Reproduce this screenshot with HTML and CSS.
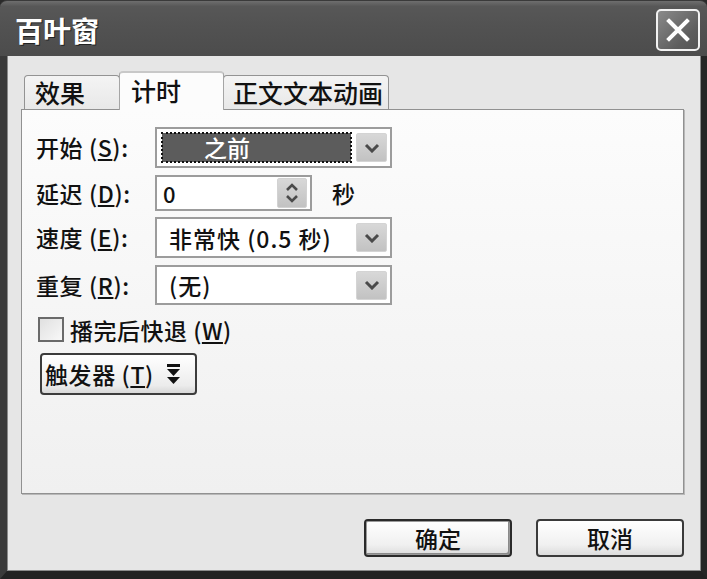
FILE: index.html
```html
<!DOCTYPE html>
<html lang="zh-CN">
<head>
<meta charset="utf-8">
<title>百叶窗</title>
<link rel="stylesheet" href="styles.css">
</head>
<body>
<div class="window">
  <div class="titlebar">
    <span class="title">百叶窗</span>
    <span class="close">
      <svg width="24" height="24" viewBox="0 0 24 24"><path d="M3 3 L21 21 M21 3 L3 21" stroke="#fff" stroke-width="4" stroke-linecap="square"/></svg>
    </span>
  </div>
  <div class="frame">
    <div class="tabs">
      <div class="tab tab-a">效果</div>
      <div class="tab tab-b active">计时</div>
      <div class="tab tab-c">正文文本动画</div>
    </div>
    <div class="panel">
      <div class="row row-tall">
        <span class="lbl">开始 (<u>S</u>):</span>
        <div class="combo">
          <span class="sel">之前</span>
          <span class="dd"><svg width="16" height="10" viewBox="0 0 16 10"><path d="M2 2 L8 8 L14 2" fill="none" stroke="#4a4a4a" stroke-width="3"/></svg></span>
        </div>
      </div>
      <div class="row row-spin">
        <span class="lbl">延迟 (<u>D</u>):</span>
        <div class="spin">
          <span class="val">0</span>
          <span class="spbtn">
            <svg width="16" height="26" viewBox="0 0 16 26"><path d="M3 10 L8 5 L13 10" fill="none" stroke="#4a4a4a" stroke-width="2.6"/><path d="M3 16 L8 21 L13 16" fill="none" stroke="#4a4a4a" stroke-width="2.6"/></svg>
          </span>
        </div>
        <span class="unit">秒</span>
      </div>
      <div class="row row-tall">
        <span class="lbl">速度 (<u>E</u>):</span>
        <div class="combo">
          <span class="txt">非常快 (0.5 秒)</span>
          <span class="dd"><svg width="16" height="10" viewBox="0 0 16 10"><path d="M2 2 L8 8 L14 2" fill="none" stroke="#4a4a4a" stroke-width="3"/></svg></span>
        </div>
      </div>
      <div class="row row-40">
        <span class="lbl">重复 (<u>R</u>):</span>
        <div class="combo">
          <span class="txt">(无)</span>
          <span class="dd"><svg width="16" height="10" viewBox="0 0 16 10"><path d="M2 2 L8 8 L14 2" fill="none" stroke="#4a4a4a" stroke-width="3"/></svg></span>
        </div>
      </div>
      <div class="check-row">
        <span class="box"></span>
        <span class="check-lbl">播完后快退 (<u>W</u>)</span>
      </div>
      <div class="trigger">
        <span>触发器 (<u>T</u>)</span>
        <svg width="15" height="21" viewBox="0 0 15 21"><rect x="1" y="0" width="13" height="3" fill="#111"/><path d="M1 5 L14 5 L7.5 12 Z" fill="#111"/><path d="M1 13 L14 13 L7.5 20 Z" fill="#111"/></svg>
      </div>
    </div>
    <div class="buttons">
      <div class="btn default">确定</div>
      <div class="btn">取消</div>
    </div>
  </div>
</div>
</body>
</html>
```

FILE: styles.css
```css
* { box-sizing: border-box; }
html, body { margin: 0; padding: 0; background: #2a2a2a; }
body { width: 707px; height: 579px; overflow: hidden; font-family: "Noto Sans CJK SC", "Noto Sans", sans-serif; color: #111; font-weight: 500; }

.window {
  width: 707px;
  height: 579px;
  display: flex;
  flex-direction: column;
}

.titlebar {
  height: 56px;
  flex: none;
  display: flex;
  align-items: center;
  justify-content: space-between;
  padding: 0 7px 0 15px;
  border-radius: 7px 7px 0 0;
  background: linear-gradient(#6e6e6e 0, #575757 10%, #525252 45%, #4c4c4c 100%);
  border-top: 1px solid #3a3a3a;
}
.title {
  color: #fff;
  font-size: 28px;
  font-weight: bold;
  line-height: 1;
  margin-top: 2px;
  text-shadow: 1px 1px 0 #222;
}
.close {
  width: 44px;
  height: 42px;
  margin-top: 2px;
  border: 2px solid #f2f2f2;
  border-radius: 5px;
  background: linear-gradient(135deg, #8a8a8a, #5e5e5e 70%, #555);
  display: flex;
  align-items: center;
  justify-content: center;
}

.frame {
  flex: 1;
  display: flex;
  flex-direction: column;
  background: #e6e6e6;
  border-left: 7px solid #3a3a3a;
  border-right: 6px solid #262626;
  border-bottom: 8px solid #222;
  box-shadow: inset 1px 0 0 #8a8a8a, inset -1px 0 0 #8a8a8a, inset 0 -1px 0 #8a8a8a;
  padding: 15px 17px 14px 14px;
}

.tabs {
  height: 38px;
  display: flex;
  align-items: flex-end;
  padding-left: 3px;
  position: relative;
  z-index: 2;
}
.tab {
  height: 34px;
  font-size: 25px;
  line-height: 33px;
  padding-left: 10px;
  background: linear-gradient(#f4f4f4, #e8e8e8);
  border: 1px solid #939393;
  border-bottom: none;
  border-radius: 4px 4px 0 0;
  white-space: nowrap;
}
.tab-a { width: 96px; }
.tab-b { width: 105px; margin-left: -1px; padding-left: 11px; }
.tab-c { width: 166px; padding-left: 9px; margin-left: -1px; }
.tab.active {
  height: 39px;
  margin-bottom: -1px;
  background: #fcfcfc;
  border-color: #a5a5a5;
  border-top: 2px solid #c8c8c8;
  line-height: 34px;
  position: relative;
  z-index: 3;
}

.panel {
  height: 385px;
  flex: none;
  background: linear-gradient(#fcfcfc, #f0f0f0);
  border: 1px solid #919191;
  box-shadow: 1px 1px 0 #b8b8b8;
  padding: 17px 0 0 14px;
  display: flex;
  flex-direction: column;
  align-items: flex-start;
}

.row {
  display: flex;
  align-items: center;
}
.row-tall { height: 41px; }
.row-40 { height: 40px; }
.row-spin { height: 36px; margin: 7px 0 6px; }
.row-40 { margin-top: 7px; }
.lbl {
  width: 119px;
  font-size: 23px;
  white-space: nowrap;
  line-height: 1;
  letter-spacing: 0.6px;
}
u { text-decoration: underline; text-underline-offset: 2px; }

.combo {
  width: 237px;
  height: 100%;
  background: #fff;
  border: 2px solid #9c9c9c;
  display: flex;
  align-items: center;
  padding: 4px 3px 4px 4px;
}
.sel {
  flex: 1;
  height: 31px;
  background: #5c5c5c;
  color: #fff;
  font-size: 23px;
  line-height: 29px;
  padding-left: 42px;
  outline: 2px dotted #111;
  outline-offset: -2px;
  border: 1px solid #fff;
  margin-right: 4px;
}
.txt {
  flex: 1;
  font-size: 23px;
  padding-left: 8px;
  white-space: nowrap;
  letter-spacing: 1px;
}
.dd {
  width: 31px;
  height: 29px;
  flex: none;
  background: linear-gradient(#d8d8d8, #c2c2c2);
  border: 1px solid #d4d4d4;
  border-radius: 2px;
  display: flex;
  align-items: center;
  justify-content: center;
  margin-left: auto;
}

.spin {
  width: 157px;
  height: 100%;
  background: #fff;
  border: 2px solid #9c9c9c;
  display: flex;
  align-items: center;
  padding: 2px 3px 2px 6px;
}
.val { flex: 1; font-size: 22px; }
.spbtn {
  width: 30px;
  height: 30px;
  background: linear-gradient(#d8d8d8, #c2c2c2);
  border: 1px solid #d2d2d2;
  border-radius: 2px;
  display: flex;
  align-items: center;
  justify-content: center;
}
.unit { font-size: 23px; margin-left: 20px; }

.check-row {
  display: flex;
  align-items: center;
  margin-top: 12px;
  margin-left: 2px;
  height: 25px;
}
.box {
  width: 26px;
  height: 25px;
  border: 2px solid #6a6a6a;
  background: linear-gradient(135deg, #e0e0e0, #f8f8f8);
}
.check-lbl { font-size: 23px; margin-left: 6px; white-space: nowrap; letter-spacing: 0.5px; }

.trigger {
  margin-top: 11px;
  margin-left: 4px;
  width: 157px;
  height: 42px;
  border: 2px solid #3c3c3c;
  border-radius: 4px;
  background: linear-gradient(#ffffff, #ececec 80%, #d8d8d8);
  display: flex;
  align-items: center;
  padding-left: 3px;
  gap: 12px;
  font-size: 23px;
  white-space: nowrap;
  letter-spacing: 0.6px;
}

.buttons {
  margin-top: 25px;
  display: flex;
  justify-content: flex-end;
  gap: 24px;
}
.btn {
  width: 148px;
  height: 38px;
  border: 2px solid #3a3a3a;
  border-radius: 4px;
  background: linear-gradient(#ffffff, #f0f0f0 70%, #dcdcdc);
  font-size: 23px;
  display: flex;
  align-items: center;
  justify-content: center;
  line-height: 1;
}
.btn.default {
  border-color: #2a2a2a;
  box-shadow: inset 0 0 0 1px #9a9a9a, inset -2px -2px 0 #8a8a8a;
}
```
